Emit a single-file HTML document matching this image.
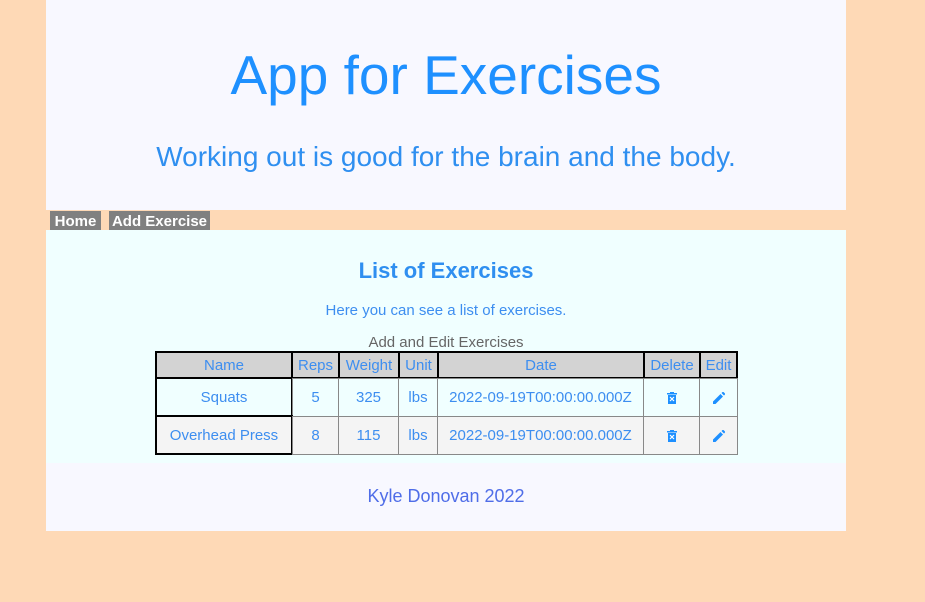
<!DOCTYPE html>
<html><head><meta charset="utf-8"><style>
body{margin:0;width:925px;height:602px;background:#fed9b6;font-family:"Liberation Sans",sans-serif;position:relative;overflow:hidden}
.a{position:absolute}
.c{text-align:center;white-space:nowrap}
.cell{position:absolute;box-sizing:border-box;display:flex;align-items:center;justify-content:center;color:#3d8ef0;font-size:15px;white-space:nowrap}
.hd{background:#d3d3d3;border:2px solid #000}
.nm{border:2px solid #000}
.bd{border:1px solid #888}
</style></head><body>
<div class="a" style="left:46px;top:0;width:800px;height:210px;background:#f8f8ff"></div>
<div class="a c" style="left:46px;width:800px;top:42px;font-size:55px;color:#1e90ff;line-height:66px">App for Exercises</div>
<div class="a c" style="left:46px;width:800px;top:140px;font-size:28px;color:#2f8ff0;line-height:34px">Working out is good for the brain and the body.</div>
<div class="a" style="left:50px;top:211px;width:51px;height:22px;background:#808080;color:#fff;font-weight:bold;font-size:15px;line-height:22px;text-align:center">Home</div>
<div class="a" style="left:109px;top:211px;width:101px;height:22px;background:#808080;color:#fff;font-weight:bold;font-size:15px;line-height:22px;text-align:center">Add Exercise</div>
<div class="a" style="left:46px;top:230px;width:800px;height:233px;background:#f0ffff"></div>
<div class="a c" style="left:46px;width:800px;top:257px;font-size:22px;font-weight:bold;color:#2f8ff0;line-height:28px">List of Exercises</div>
<div class="a c" style="left:46px;width:800px;top:302px;font-size:15px;color:#3d8ef0;line-height:18px">Here you can see a list of exercises.</div>
<div class="a c" style="left:46px;width:800px;top:334px;font-size:15px;color:#666;line-height:18px">Add and Edit Exercises</div>
<div class="cell hd" style="left:155px;top:351px;width:138px;height:28px">Name</div>
<div class="cell hd" style="left:291px;top:351px;width:49px;height:28px">Reps</div>
<div class="cell hd" style="left:338px;top:351px;width:62px;height:28px">Weight</div>
<div class="cell hd" style="left:398px;top:351px;width:41px;height:28px">Unit</div>
<div class="cell hd" style="left:437px;top:351px;width:208px;height:28px">Date</div>
<div class="cell hd" style="left:643px;top:351px;width:58px;height:28px">Delete</div>
<div class="cell hd" style="left:699px;top:351px;width:39px;height:28px">Edit</div>
<div class="cell nm" style="left:155px;top:377px;width:138px;height:40px">Squats</div>
<div class="cell bd" style="left:292px;top:378px;width:47px;height:39px">5</div>
<div class="cell bd" style="left:338px;top:378px;width:61px;height:39px">325</div>
<div class="cell bd" style="left:398px;top:378px;width:40px;height:39px">lbs</div>
<div class="cell bd" style="left:437px;top:378px;width:207px;height:39px">2022-09-19T00:00:00.000Z</div>
<div class="cell bd" style="left:643px;top:378px;width:57px;height:39px"><svg width="10" height="12" viewBox="0 0 10 12"><rect x="0" y="1" width="10" height="1.5" fill="#1e90ff"/><rect x="3" y="0" width="4" height="1.5" fill="#1e90ff"/><rect x="1" y="3" width="8" height="9" fill="#1e90ff"/><path d="M3 5l4 4M7 5l-4 4" stroke="#fff" stroke-width="1.2"/></svg></div>
<div class="cell bd" style="left:699px;top:378px;width:39px;height:39px"><svg width="12" height="12" viewBox="0 0 12 12"><path d="M0 12v-2.5L7.5 2 10 4.5 2.5 12z M8.5 1 10 -0.5 12.5 2 11 3.5z" fill="#1e90ff"/></svg></div>
<div class="cell nm" style="left:155px;top:415px;width:138px;height:40px;background:#f4f4f4">Overhead Press</div>
<div class="cell bd" style="left:292px;top:416px;width:47px;height:39px;background:#f4f4f4">8</div>
<div class="cell bd" style="left:338px;top:416px;width:61px;height:39px;background:#f4f4f4">115</div>
<div class="cell bd" style="left:398px;top:416px;width:40px;height:39px;background:#f4f4f4">lbs</div>
<div class="cell bd" style="left:437px;top:416px;width:207px;height:39px;background:#f4f4f4">2022-09-19T00:00:00.000Z</div>
<div class="cell bd" style="left:643px;top:416px;width:57px;height:39px;background:#f4f4f4"><svg width="10" height="12" viewBox="0 0 10 12"><rect x="0" y="1" width="10" height="1.5" fill="#1e90ff"/><rect x="3" y="0" width="4" height="1.5" fill="#1e90ff"/><rect x="1" y="3" width="8" height="9" fill="#1e90ff"/><path d="M3 5l4 4M7 5l-4 4" stroke="#fff" stroke-width="1.2"/></svg></div>
<div class="cell bd" style="left:699px;top:416px;width:39px;height:39px;background:#f4f4f4"><svg width="12" height="12" viewBox="0 0 12 12"><path d="M0 12v-2.5L7.5 2 10 4.5 2.5 12z M8.5 1 10 -0.5 12.5 2 11 3.5z" fill="#1e90ff"/></svg></div>
<div class="a" style="left:46px;top:463px;width:800px;height:68px;background:#f8f8ff"></div>
<div class="a c" style="left:46px;width:800px;top:485px;font-size:18px;color:#4f6de8;line-height:22px">Kyle Donovan 2022</div>
</body></html>
